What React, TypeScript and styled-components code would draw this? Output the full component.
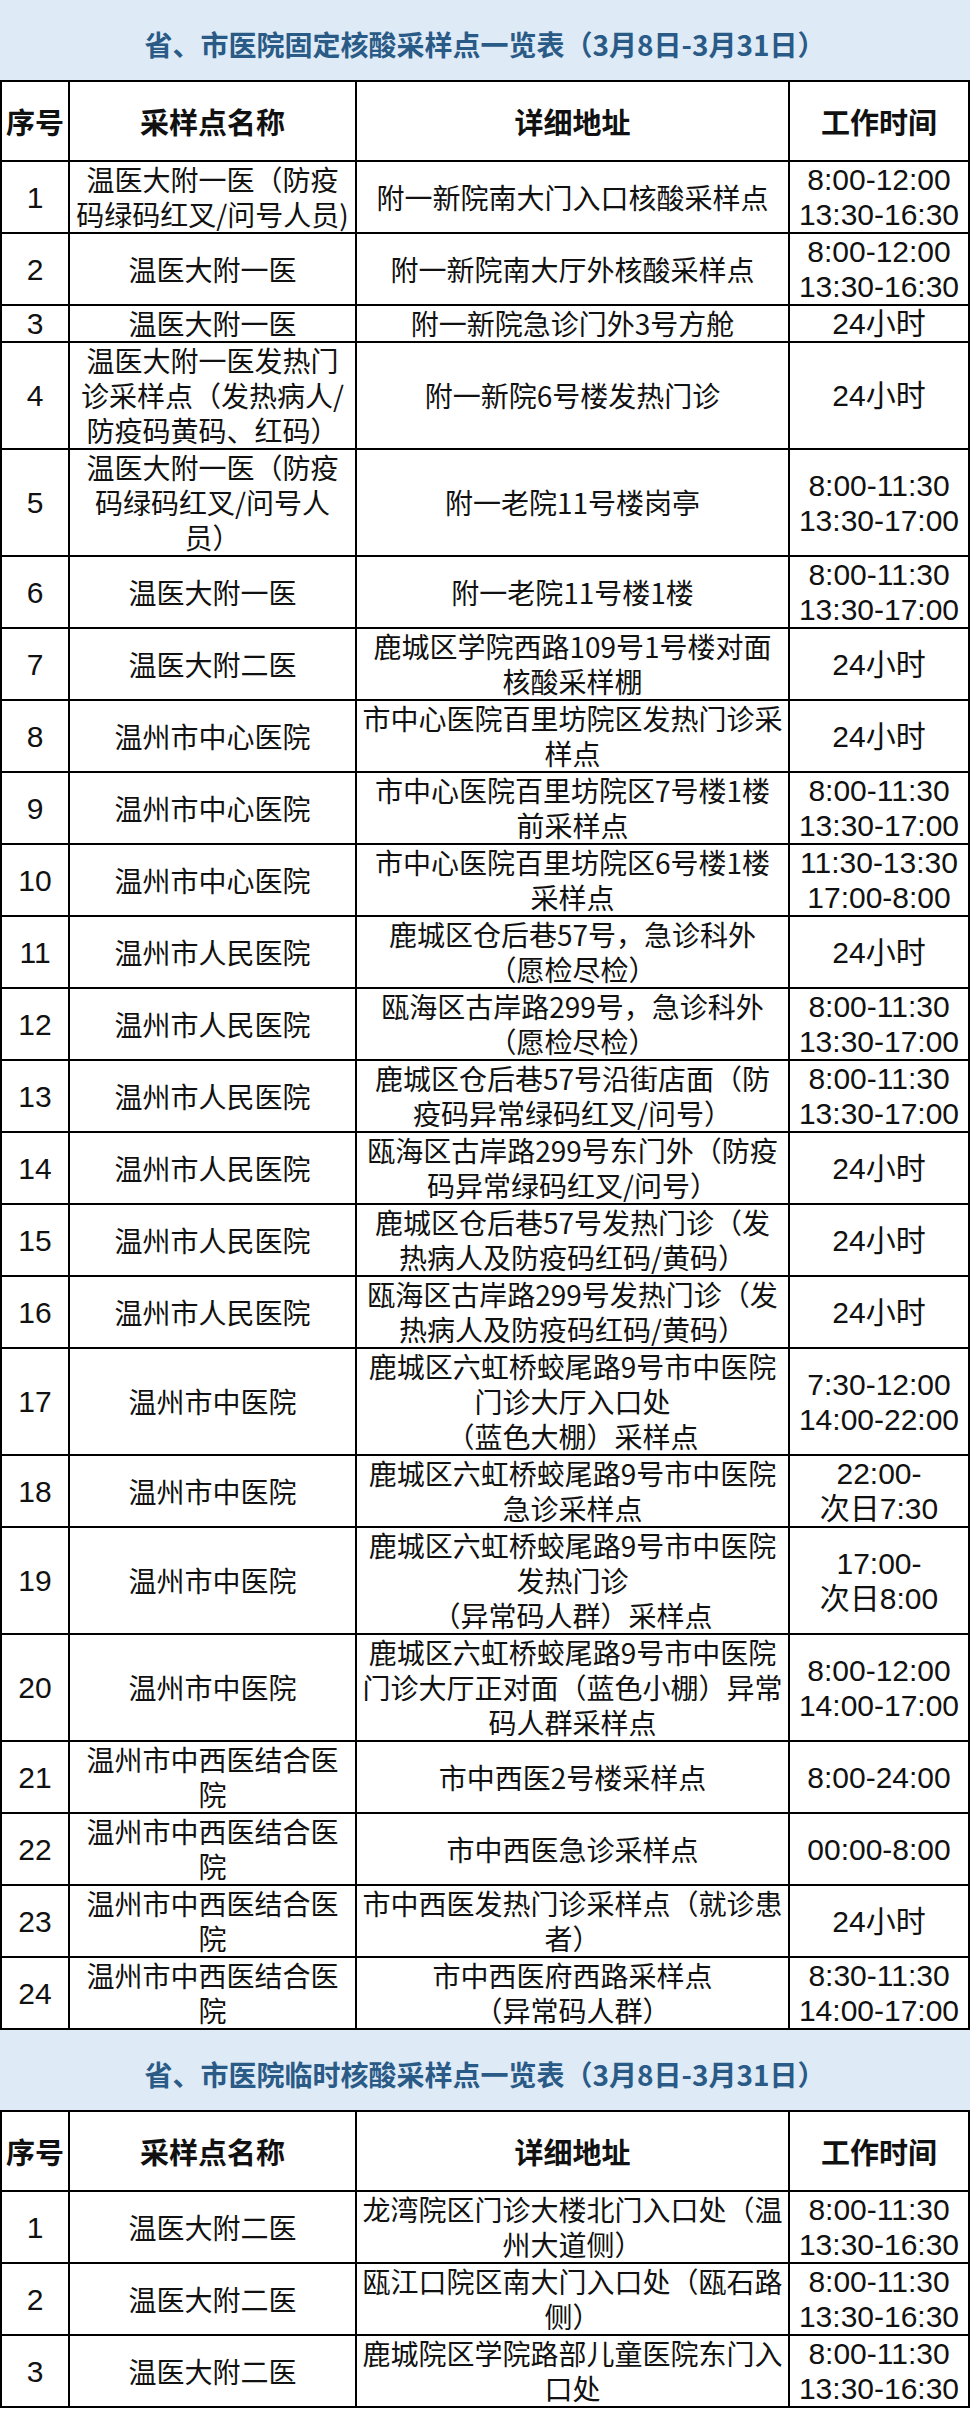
import React from "react";
import styled, { createGlobalStyle } from "styled-components";

type Row = {
  no: string;
  name: string[];
  addr: string[];
  time: string[];
};

const fixedRows: Row[] = [
  { no: "1", name: ["温医大附一医（防疫", "码绿码红叉/问号人员)"], addr: ["附一新院南大门入口核酸采样点"], time: ["8:00-12:00", "13:30-16:30"] },
  { no: "2", name: ["温医大附一医"], addr: ["附一新院南大厅外核酸采样点"], time: ["8:00-12:00", "13:30-16:30"] },
  { no: "3", name: ["温医大附一医"], addr: ["附一新院急诊门外3号方舱"], time: ["24小时"] },
  { no: "4", name: ["温医大附一医发热门", "诊采样点（发热病人/", "防疫码黄码、红码）"], addr: ["附一新院6号楼发热门诊"], time: ["24小时"] },
  { no: "5", name: ["温医大附一医（防疫", "码绿码红叉/问号人", "员）"], addr: ["附一老院11号楼岗亭"], time: ["8:00-11:30", "13:30-17:00"] },
  { no: "6", name: ["温医大附一医"], addr: ["附一老院11号楼1楼"], time: ["8:00-11:30", "13:30-17:00"] },
  { no: "7", name: ["温医大附二医"], addr: ["鹿城区学院西路109号1号楼对面", "核酸采样棚"], time: ["24小时"] },
  { no: "8", name: ["温州市中心医院"], addr: ["市中心医院百里坊院区发热门诊采", "样点"], time: ["24小时"] },
  { no: "9", name: ["温州市中心医院"], addr: ["市中心医院百里坊院区7号楼1楼", "前采样点"], time: ["8:00-11:30", "13:30-17:00"] },
  { no: "10", name: ["温州市中心医院"], addr: ["市中心医院百里坊院区6号楼1楼", "采样点"], time: ["11:30-13:30", "17:00-8:00"] },
  { no: "11", name: ["温州市人民医院"], addr: ["鹿城区仓后巷57号，急诊科外", "（愿检尽检）"], time: ["24小时"] },
  { no: "12", name: ["温州市人民医院"], addr: ["瓯海区古岸路299号，急诊科外", "（愿检尽检）"], time: ["8:00-11:30", "13:30-17:00"] },
  { no: "13", name: ["温州市人民医院"], addr: ["鹿城区仓后巷57号沿街店面（防", "疫码异常绿码红叉/问号）"], time: ["8:00-11:30", "13:30-17:00"] },
  { no: "14", name: ["温州市人民医院"], addr: ["瓯海区古岸路299号东门外（防疫", "码异常绿码红叉/问号）"], time: ["24小时"] },
  { no: "15", name: ["温州市人民医院"], addr: ["鹿城区仓后巷57号发热门诊（发", "热病人及防疫码红码/黄码）"], time: ["24小时"] },
  { no: "16", name: ["温州市人民医院"], addr: ["瓯海区古岸路299号发热门诊（发", "热病人及防疫码红码/黄码）"], time: ["24小时"] },
  { no: "17", name: ["温州市中医院"], addr: ["鹿城区六虹桥蛟尾路9号市中医院", "门诊大厅入口处", "（蓝色大棚）采样点"], time: ["7:30-12:00", "14:00-22:00"] },
  { no: "18", name: ["温州市中医院"], addr: ["鹿城区六虹桥蛟尾路9号市中医院", "急诊采样点"], time: ["22:00-", "次日7:30"] },
  { no: "19", name: ["温州市中医院"], addr: ["鹿城区六虹桥蛟尾路9号市中医院", "发热门诊", "（异常码人群）采样点"], time: ["17:00-", "次日8:00"] },
  { no: "20", name: ["温州市中医院"], addr: ["鹿城区六虹桥蛟尾路9号市中医院", "门诊大厅正对面（蓝色小棚）异常", "码人群采样点"], time: ["8:00-12:00", "14:00-17:00"] },
  { no: "21", name: ["温州市中西医结合医", "院"], addr: ["市中西医2号楼采样点"], time: ["8:00-24:00"] },
  { no: "22", name: ["温州市中西医结合医", "院"], addr: ["市中西医急诊采样点"], time: ["00:00-8:00"] },
  { no: "23", name: ["温州市中西医结合医", "院"], addr: ["市中西医发热门诊采样点（就诊患", "者）"], time: ["24小时"] },
  { no: "24", name: ["温州市中西医结合医", "院"], addr: ["市中西医府西路采样点", "（异常码人群）"], time: ["8:30-11:30", "14:00-17:00"] },
];

const tempRows: Row[] = [
  { no: "1", name: ["温医大附二医"], addr: ["龙湾院区门诊大楼北门入口处（温", "州大道侧）"], time: ["8:00-11:30", "13:30-16:30"] },
  { no: "2", name: ["温医大附二医"], addr: ["瓯江口院区南大门入口处（瓯石路", "侧）"], time: ["8:00-11:30", "13:30-16:30"] },
  { no: "3", name: ["温医大附二医"], addr: ["鹿城院区学院路部儿童医院东门入", "口处"], time: ["8:00-11:30", "13:30-16:30"] },
];

const GlobalStyle = createGlobalStyle`
  body {
    margin: 0;
    background: #ffffff;
    font-family: "Noto Sans CJK SC", "Noto Sans", sans-serif;
  }
`;

export default function App() {
  return (
    <>
      <GlobalStyle />
      <Page>
        <SiteTable title="省、市医院固定核酸采样点一览表（3月8日-3月31日）" rows={fixedRows} />
        <SiteTable title="省、市医院临时核酸采样点一览表（3月8日-3月31日）" rows={tempRows} />
      </Page>
    </>
  );
}

function Lines({ items }: { items: string[] }) {
  return (
    <>
      {items.map((line, i) => (
        <Line key={i}>{line}</Line>
      ))}
    </>
  );
}

function SiteTable({ title, rows }: { title: string; rows: Row[] }) {
  return (
    <section>
      <TitleBand>{title}</TitleBand>
      <Table>
        <colgroup>
          <col style={{ width: 68 }} />
          <col style={{ width: 287 }} />
          <col style={{ width: 433 }} />
          <col />
        </colgroup>
        <thead>
          <tr>
            <HeadCell>序号</HeadCell>
            <HeadCell>采样点名称</HeadCell>
            <HeadCell>详细地址</HeadCell>
            <HeadCell>工作时间</HeadCell>
          </tr>
        </thead>
        <tbody>
          {rows.map((row) => (
            <tr key={row.no}>
              <Cell $digits>{row.no}</Cell>
              <Cell>
                <Lines items={row.name} />
              </Cell>
              <Cell>
                <Lines items={row.addr} />
              </Cell>
              <Cell $digits>
                <Lines items={row.time} />
              </Cell>
            </tr>
          ))}
        </tbody>
      </Table>
    </section>
  );
}

const Page = styled.main`
  width: 970px;
`;

const TitleBand = styled.h2`
  margin: 0;
  height: 80px;
  display: flex;
  align-items: center;
  justify-content: center;
  padding-top: 8px;
  box-sizing: border-box;
  background: #deeaf6;
  color: #2a5a86;
  font-size: 28px;
  font-weight: 700;
`;

const Table = styled.table`
  width: 970px;
  table-layout: fixed;
  border-collapse: collapse;
  border: 2px solid #000;
`;

const HeadCell = styled.th`
  height: 78px;
  padding: 0;
  border: 2px solid #000;
  font-size: 29px;
  font-weight: 700;
  color: #111;
  text-align: center;
  vertical-align: middle;
  white-space: nowrap;
`;

const Cell = styled.td<{ $digits?: boolean }>`
  padding: 0;
  border: 2px solid #000;
  font-family: ${(p) =>
    p.$digits ? `"Liberation Sans", "Noto Sans CJK SC", sans-serif` : `"Noto Sans CJK SC", sans-serif`};
  font-size: ${(p) => (p.$digits ? "30px" : "28px")};
  line-height: 35px;
  color: #111;
  text-align: center;
  vertical-align: middle;
  white-space: nowrap;
`;

const Line = styled.span`
  display: block;
`;
